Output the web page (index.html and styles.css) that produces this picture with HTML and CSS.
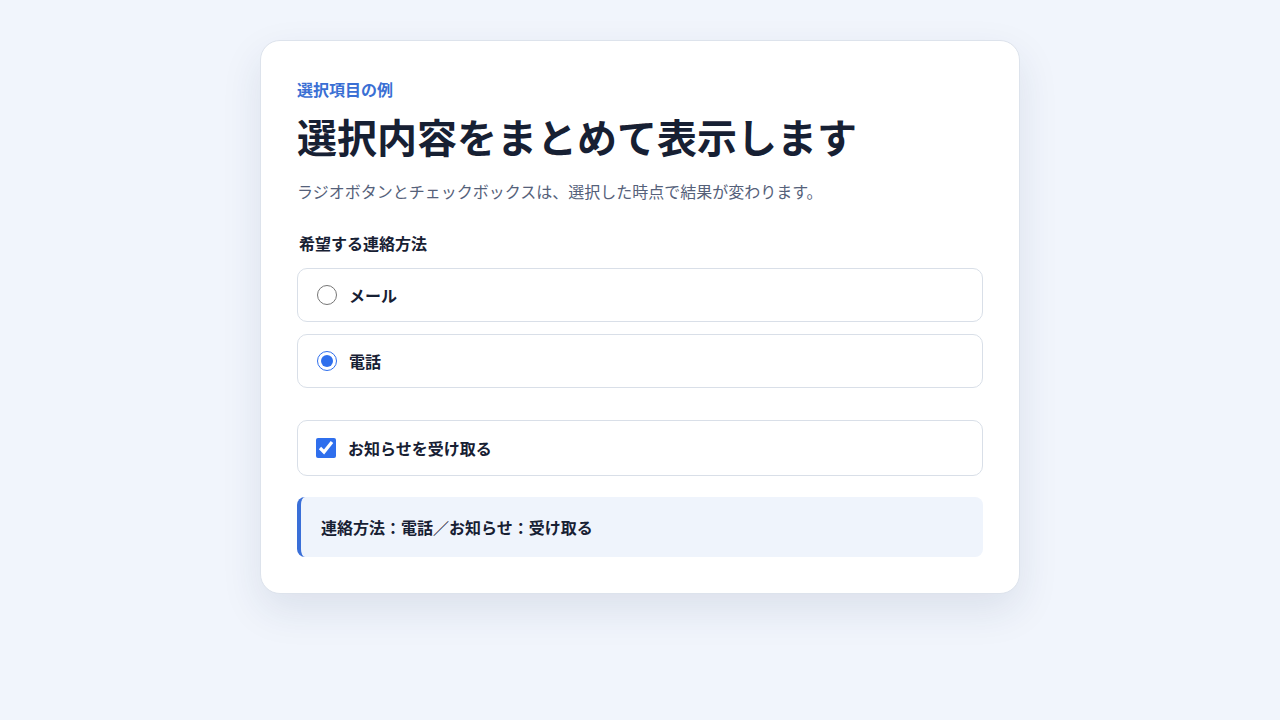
FILE: index.html
```html
<!DOCTYPE html>
<html lang="ja">
  <head>
    <meta charset="UTF-8" />
    <meta name="viewport" content="width=device-width, initial-scale=1.0" />
    <title>選択項目の例</title>
    <link rel="stylesheet" href="styles.css">
  </head>
  <body>
    <main class="card">
      <p class="eyebrow">選択項目の例</p>
      <h1 class="title">選択内容をまとめて表示します</h1>
      <p class="lead">ラジオボタンとチェックボックスは、選択した時点で結果が変わります。</p>

      <fieldset class="group">
        <legend>希望する連絡方法</legend>
        <div class="options">
          <label class="option">
            <input type="radio" name="contact" value="メール" />
            <span>メール</span>
          </label>
          <label class="option">
            <input type="radio" name="contact" value="電話" checked />
            <span>電話</span>
          </label>
        </div>
      </fieldset>

      <label class="option check">
        <input type="checkbox" class="notify" checked />
        <span>お知らせを受け取る</span>
      </label>

      <div class="summary">連絡方法：電話／お知らせ：受け取る</div>
    </main>

    <script>
      // Update the summary whenever a choice changes
      const summary = document.querySelector(".summary");
      const notify = document.querySelector(".notify");

      function updateSummary() {
        const picked = document.querySelector("input[name='contact']:checked");
        const method = picked ? picked.value : "未選択";
        const news = notify.checked ? "受け取る" : "受け取らない";
        summary.textContent = `連絡方法：${method}／お知らせ：${news}`;
      }

      document.querySelectorAll("input").forEach((input) => {
        input.addEventListener("change", updateSummary);
      });
    </script>
  </body>
</html>
```

FILE: styles.css
```css
* {
  margin: 0;
  padding: 0;
  box-sizing: border-box;
  font-family: "Noto Sans CJK JP", "Noto Sans", sans-serif;
}

html,
body {
  min-height: 100vh;
}
body {
  background-color: #f1f5fc;
  color: #172033;
  padding: 40px 0;
}
.card {
  width: 760px;
  margin: 0 auto;
  padding: 36px;
  background-color: #ffffff;
  border: 1px solid #dde3ec;
  border-radius: 20px;
  box-shadow: 0 16px 40px rgba(30, 50, 90, 0.1);
}
.eyebrow {
  font-size: 16px;
  line-height: 24px;
  font-weight: 700;
  color: #3a6fd4;
}
.title {
  margin-top: 11px;
  font-size: 40px;
  line-height: 48px;
  font-weight: 700;
  color: #172033;
}
.lead {
  margin-top: 19px;
  font-size: 16px;
  line-height: 24px;
  color: #55617a;
}
.group {
  margin-top: 28px;
  border: none;
}
.group legend {
  padding: 0 2px;
  font-size: 16px;
  line-height: 24px;
  font-weight: 700;
}
.options {
  display: flex;
  flex-direction: column;
  gap: 12px;
  margin-top: 13px;
}
.option {
  display: flex;
  align-items: center;
  gap: 12px;
  padding: 14px 18px;
  border: 1px solid #d9dfe8;
  border-radius: 10px;
  font-size: 16px;
  line-height: 24px;
  font-weight: 700;
  cursor: pointer;
}
.options .option {
  padding-left: 19px;
}
.option input {
  width: 20px;
  height: 20px;
  margin: 0;
  accent-color: #2f6fed;
}
.check {
  margin-top: 32px;
  padding: 15px 18px;
}
.summary {
  margin-top: 21px;
  padding: 18px 20px;
  background-color: #eff4fc;
  border-left: 4px solid #3a6fd8;
  border-radius: 8px;
  font-size: 16px;
  line-height: 24px;
  font-weight: 700;
}
```
